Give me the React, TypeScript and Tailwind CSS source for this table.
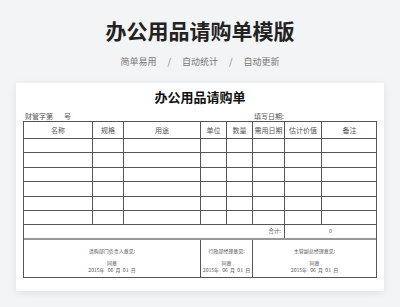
import React from "react";

const cols = [69, 31, 77, 26, 26, 32, 37, 55];
const heads = ["名称", "规格", "用途", "单位", "数量", "需用日期", "估计价值", "备注"];
const rowHeights = ["h-[14px]", "h-[15px]", "h-[14px]", "h-[15px]", "h-[14px]", "h-[14px]"];

function Cells({ texts }: { texts?: string[] }) {
  return (
    <>
      {cols.map((w, i) => (
        <div
          key={i}
          style={{ width: w }}
          className={`flex shrink-0 items-center justify-center ${i < cols.length - 1 ? "border-r border-[#555]" : ""}`}
        >
          {texts ? texts[i] : null}
        </div>
      ))}
    </>
  );
}

function Sign({ label, w, border }: { label: string; w: string; border?: boolean }) {
  return (
    <div className={`${w} flex flex-col items-center shrink-0 ${border ? "border-r border-[#555]" : ""}`}>
      <div className="mt-[7px] leading-[8px]">{label}</div>
      <div className="mt-[4px] leading-[7px]">同意</div>
      <div className="leading-[7px] whitespace-pre">2015年   06  月  01  日</div>
    </div>
  );
}

export default function App() {
  return (
    <div
      className="w-[400px] h-[307px] bg-[#f3f4f6] flex flex-col items-center overflow-hidden"
      style={{ fontFamily: '"Noto Sans CJK SC", "Noto Sans", sans-serif' }}
    >
      <div className="pt-[16px] text-[21px] leading-[28px] font-bold text-[#222]">
        办公用品请购单模版
      </div>
      <div className="mt-[11px] text-[9px] leading-[14px] text-[#777] flex items-center">
        <span>简单易用</span>
        <span className="mx-[11px]">/</span>
        <span>自动统计</span>
        <span className="mx-[11px]">/</span>
        <span>自动更新</span>
      </div>
      <div className="mt-[14px] w-[368px] bg-white shadow-[0_2px_8px_rgba(0,0,0,0.08)] px-[7px] pt-[5px] pb-[13px] flex flex-col">
        <div className="text-center text-[13px] leading-[18px] font-semibold text-[#111]">办公用品请购单</div>
        <div className="mt-[5px] flex text-[7px] leading-[10px] text-[#555] pl-[2px]">
          <span className="w-[229px] whitespace-pre">财管字第       号</span>
          <span>填写日期:</span>
        </div>
        <div className="border border-[#555] w-[354px] text-[7px] text-[#555]">
          <div className="flex h-[17px] border-b border-[#555]">
            <Cells texts={heads} />
          </div>
          {rowHeights.map((h, r) => (
            <div key={r} className={`flex ${h} border-b border-[#555]`}>
              <Cells />
            </div>
          ))}
          <div className="flex h-[15px] border-b-2 border-[#999] text-[5.5px]">
            <div className="w-[261px] flex items-center justify-end pr-[3px] border-r border-[#555]">合计:</div>
            <div className="flex-1 flex items-center justify-center">0</div>
          </div>
          <div className="flex h-[37px] text-[5px] text-[#555]">
            <Sign label="请购部门负责人意见:" w="w-[177px]" border />
            <Sign label="行政部经理意见:" w="w-[52px]" border />
            <Sign label="主管副总经理意见:" w="flex-1" />
          </div>
        </div>
      </div>
    </div>
  );
}
